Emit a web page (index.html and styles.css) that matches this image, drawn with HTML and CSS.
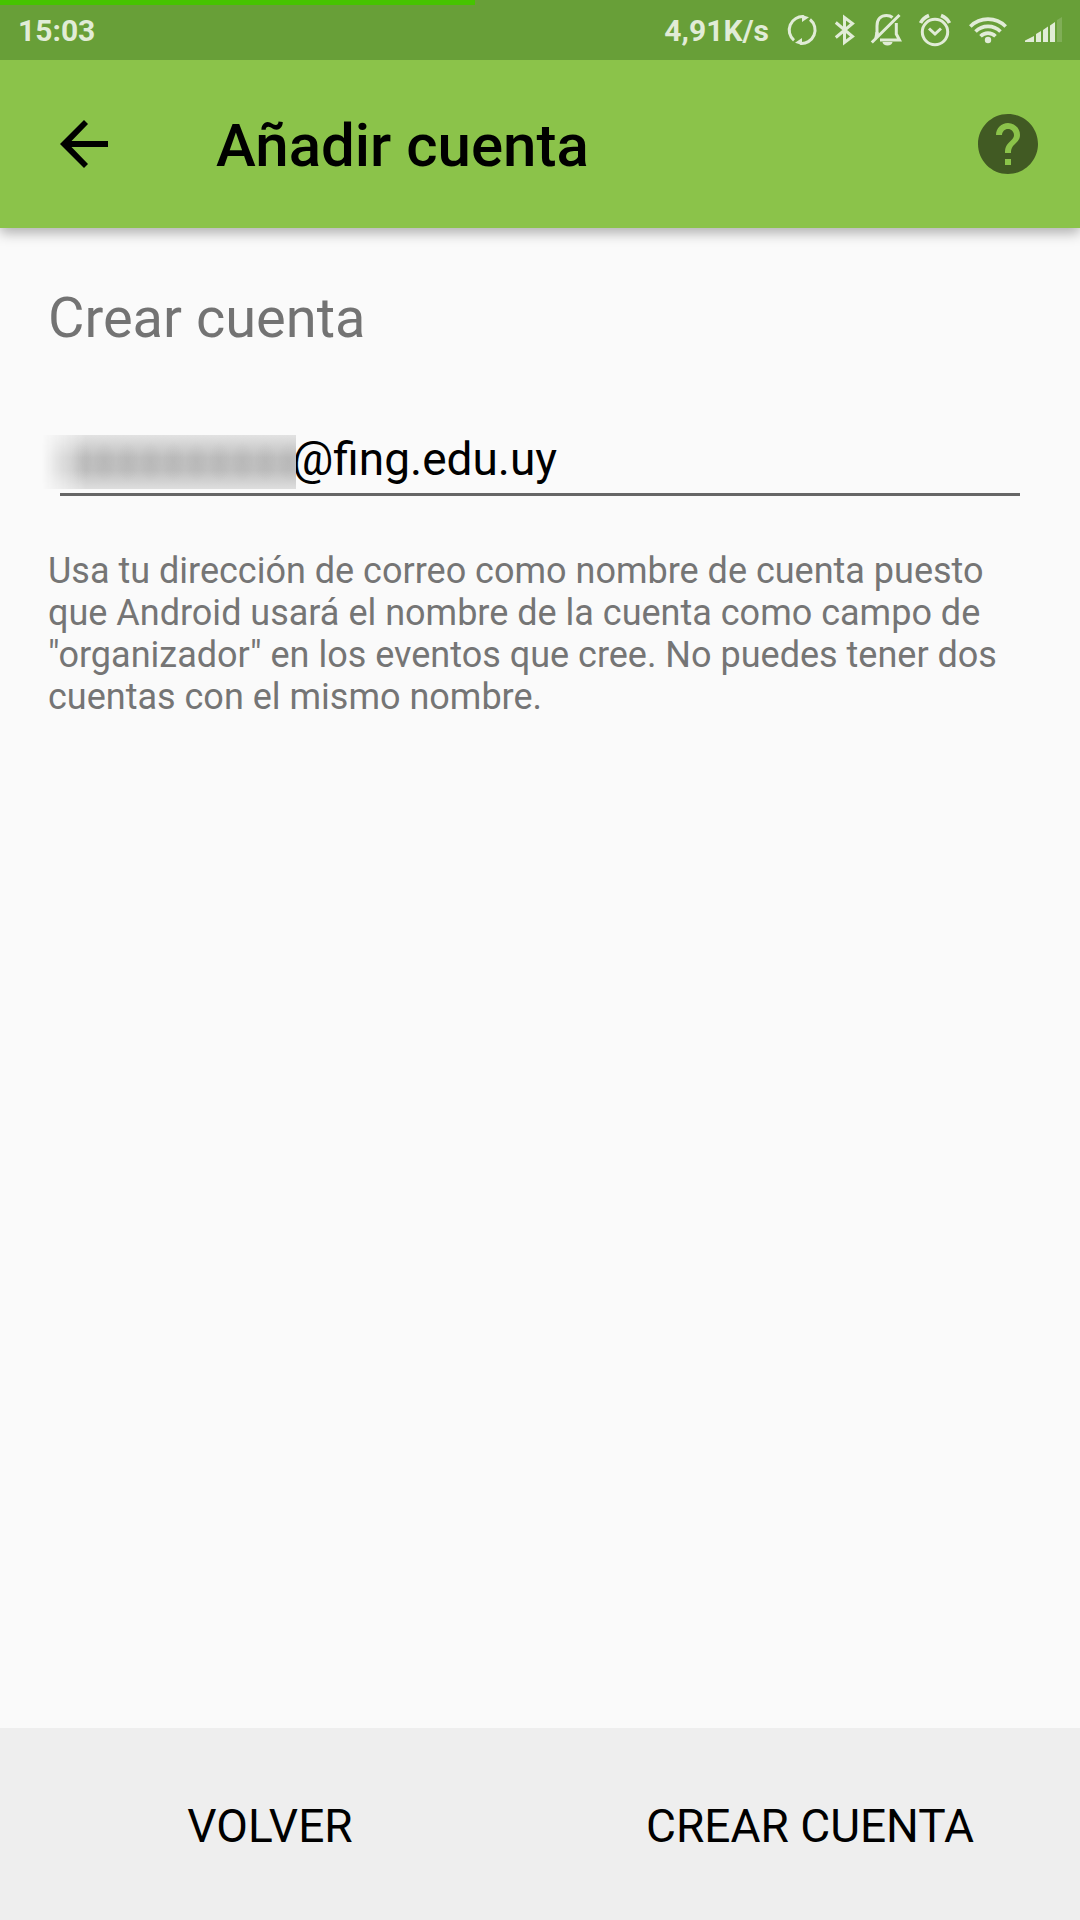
FILE: index.html
```html
<!DOCTYPE html>
<html lang="es">
<head>
<meta charset="utf-8">
<meta name="viewport" content="width=device-width, initial-scale=1">
<title>Añadir cuenta</title>
<link rel="stylesheet" href="styles.css">
</head>
<body>
<div class="screen">
  <div class="status-bar">
    <div class="status-progress"></div>
    <span class="status-time">15:03</span>
    <div class="status-icons">
      <span>4,91K/s</span>
      <svg class="icon-sync" viewBox="0 0 30 30" aria-hidden="true">
        <g fill="none" stroke="currentColor" stroke-width="3"><path d="M7 25.3A13.4 13.4 0 0 1 17 1.7M23 4.5A13.4 13.4 0 0 1 13 28.3"/></g>
        <path fill="currentColor" d="M15 0 22 2.2 15 7zM15 30 8 27.8 15 23z"/>
      </svg>
      <svg class="icon-bluetooth" viewBox="0 0 18 30" aria-hidden="true">
        <path fill="none" stroke="currentColor" stroke-width="3" d="M.8 7.5 17.5 21.5 9.5 27.5V2.5L17.5 8.5.8 22.5"/>
      </svg>
      <svg class="icon-bell" viewBox="0 0 30 32" aria-hidden="true">
        <g fill="none" stroke="currentColor" stroke-width="3"><path d="M6 20V12C6 5 10 1.5 15.500 1.500 18 1.500 20 2.200 21.500 3.500M25.300 9V20L28.500 26H9M.8 28.500 28.500 1"/></g>
        <path fill="currentColor" d="M4.500 18H7.500v4L3 26z M11.500 28h10a5 3.500 0 0 1-10 0z"/>
      </svg>
      <svg class="icon-alarm" viewBox="0 0 32 32" aria-hidden="true">
        <g fill="none" stroke="currentColor" stroke-width="3"><circle cx="16" cy="18" r="12.700"/><path d="M10 14.500 16 20 22 14.500" /><path stroke-width="3.600" d="M1.500 9Q4 4 10 1.500M30.500 9Q28 4 22 1.500"/></g>
      </svg>
      <svg class="icon-wifi" viewBox="0 0 38 28" aria-hidden="true">
        <g fill="none" stroke="currentColor" stroke-width="3.600"><path d="M1.300 10.500A25 25 0 0 1 36.700 10.500M6.500 15.500A17.700 17.700 0 0 1 31.500 15.500M11.500 20.200A10.700 10.700 0 0 1 26.500 20.200"/></g>
        <circle cx="19" cy="24" r="3.200" fill="currentColor"/>
      </svg>
      <svg class="icon-signal" viewBox="0 0 37 26" aria-hidden="true">
        <path fill="currentColor" d="M0 25V23.500L9 19V25zM11 25V17L16 14V25zM18 25V13L23 9.500V25zM25 25V8.500L30 5V25z"/>
        <path fill="currentColor" opacity=".2" d="M32 25V3L37 0V25z"/>
      </svg>
    </div>
  </div>
  <header class="app-bar">
    <button class="icon-button" type="button" aria-label="Atrás">
      <svg class="icon-back" viewBox="0 0 48 48" aria-hidden="true"><path d="M48 21H11.500L28 4 24 0 0 24 24 48 28 44 11.500 27H48z"/></svg>
    </button>
    <h1 class="app-title">Añadir cuenta</h1>
    <button class="icon-button" type="button" aria-label="Ayuda">
      <svg class="icon-help" viewBox="2 2 20 20" aria-hidden="true"><path d="M12 2C6.480 2 2 6.480 2 12s4.480 10 10 10 10-4.480 10-10S17.520 2 12 2zm1 17h-2v-2h2v2zm2.070-7.750l-.9.920C13.450 12.900 13 13.500 13 15h-2v-.5c0-1.100.450-2.100 1.170-2.830l1.240-1.260c.370-.360.590-.860.590-1.410 0-1.100-.9-2-2-2s-2 .9-2 2H8c0-2.210 1.790-4 4-4s4 1.790 4 4c0 .880-.360 1.680-.930 2.250z"/></svg>
    </button>
  </header>
  <main class="content">
    <h2 class="heading">Crear cuenta</h2>
    <div class="field">
      <input class="account" type="text" value="@fing.edu.uy" aria-label="Nombre de la cuenta" aria-describedby="hint">
      <div class="redaction"></div>
    </div>
    <p class="hint" id="hint">Usa tu dirección de correo como nombre de cuenta puesto que Android usará el nombre de la cuenta como campo de "organizador" en los eventos que cree. No puedes tener dos cuentas con el mismo nombre.</p>
  </main>
  <footer class="actions">
    <button class="action" type="button">VOLVER</button>
    <button class="action" type="button">CREAR CUENTA</button>
  </footer>
</div>
</body>
</html>
```
FILE: styles.css
```css
* { box-sizing: border-box; }

body {
  margin: 0;
  background: #fafafa;
  color: #000;
  font-family: Roboto, "Liberation Sans", sans-serif;
}

button {
  border: 0;
  padding: 0;
  background: none;
  color: inherit;
  font: inherit;
}

svg { display: block; overflow: visible; }

.screen {
  display: flex;
  flex-direction: column;
  min-height: 100vh;
}

.status-bar {
  position: relative;
  display: flex;
  align-items: center;
  justify-content: space-between;
  height: 60px;
  padding: 0 18px;
  background: #689f38;
  color: #e1ecd7;
  font-size: 30px;
  font-weight: 700;
}

.status-progress {
  position: absolute;
  top: 0;
  left: 0;
  width: 44%;
  height: 5px;
  background: #46c400;
}

.status-icons {
  display: flex;
  align-items: center;
  gap: 18px;
}

.icon-sync { width: 30px; height: 30px; }
.icon-bluetooth { width: 18px; height: 30px; }
.icon-bell { width: 30px; height: 32px; }
.icon-alarm { width: 32px; height: 32px; }
.icon-wifi { width: 38px; height: 28px; }
.icon-signal { width: 37px; height: 26px; }

.app-bar {
  display: flex;
  align-items: center;
  height: 168px;
  padding: 0 42px 0 60px;
  background: #8bc34a;
  box-shadow: 0 5px 12px rgba(0, 0, 0, 0.3);
}

.icon-back { width: 48px; height: 48px; }
.icon-help { width: 60px; height: 60px; fill: #415a23; }

.app-title {
  flex: 1;
  margin: 0;
  padding: 4px 0 0 108px;
  font-size: 60px;
  font-weight: 500;
  line-height: 72px;
}

.content {
  flex: 1;
  padding: 54px 48px;
}

.heading {
  margin: 0;
  color: #737373;
  font-size: 56px;
  font-weight: 400;
  line-height: 72px;
}

.field {
  position: relative;
  margin: 66px 12px 0;
}

.account {
  display: block;
  width: 100%;
  height: 76px;
  padding: 4px 0 0 232px;
  border: 0;
  border-bottom: 3px solid #666;
  border-radius: 0;
  outline: 0;
  background: none;
  color: #000;
  font-family: inherit;
  font-size: 46px;
}

.redaction {
  position: absolute;
  top: 15px;
  left: -18px;
  width: 254px;
  height: 54px;
  background:
    radial-gradient(closest-side, rgba(150, 150, 150, 0.16), transparent) 28px 6px / 23px 42px repeat-x,
    linear-gradient(#e2e2e2, #bfbfbf 42%, #bfbfbf 65%, #dedede);
  -webkit-mask-image: linear-gradient(90deg, transparent, #000 44px);
  mask-image: linear-gradient(90deg, transparent, #000 44px);
}

.hint {
  margin: 54px 0 0;
  color: #757575;
  font-size: 36px;
  line-height: 42px;
}

.actions {
  display: flex;
  height: 192px;
  padding-top: 4px;
  background: #eee;
}

.action {
  flex: 1;
  font-size: 46px;
}
```
